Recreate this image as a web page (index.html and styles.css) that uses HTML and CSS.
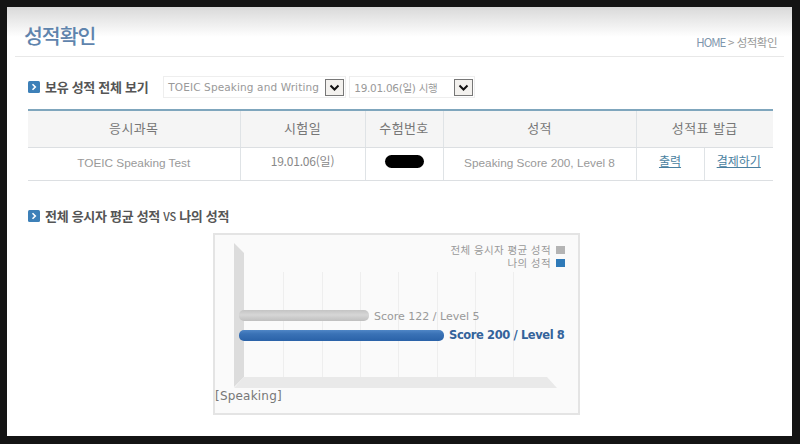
FILE: index.html
```html
<!DOCTYPE html>
<html lang="ko">
<head>
    <meta charset="UTF-8">
    <title>성적확인</title>
    <link rel="stylesheet" href="styles.css">
</head>
<body>
    <div class="page">
        <div class="top">
            <h1>성적확인</h1>
            <div class="crumb"><span class="home">HOME</span> &gt; 성적확인</div>
        </div>

        <div class="heading">
            <svg class="bullet" width="12" height="12" viewBox="0 0 12 12"><rect width="12" height="12" rx="1.5" fill="#3d80b8"/><path d="M4.500 3.200 7.300 6 4.500 8.800" fill="none" stroke="#fff" stroke-width="1.6"/></svg>
            <h2>보유 성적 전체 보기</h2>
            <div class="select sel-test">
                <span>TOEIC Speaking and Writing</span>
                <svg class="arrow" width="19" height="17" viewBox="0 0 19 17"><rect x=".5" y=".5" width="18" height="16" fill="#f3f1ee" stroke="#777"/><path d="M5.500 6.500 9.500 10.500 13.500 6.500" fill="none" stroke="#111" stroke-width="2"/></svg>
            </div>
            <div class="select sel-date">
                <span>19.01.06(일) 시행</span>
                <svg class="arrow" width="19" height="17" viewBox="0 0 19 17"><rect x=".5" y=".5" width="18" height="16" fill="#f3f1ee" stroke="#777"/><path d="M5.500 6.500 9.500 10.500 13.500 6.500" fill="none" stroke="#111" stroke-width="2"/></svg>
            </div>
        </div>

        <table class="scores">
            <colgroup>
                <col class="c1"><col class="c2"><col class="c3"><col class="c4"><col class="c5"><col class="c6">
            </colgroup>
            <tr>
                <th>응시과목</th>
                <th>시험일</th>
                <th>수험번호</th>
                <th>성적</th>
                <th colspan="2">성적표 발급</th>
            </tr>
            <tr>
                <td>TOEIC Speaking Test</td>
                <td class="date">19.01.06(일)</td>
                <td class="num"><span class="blackout"></span></td>
                <td>Speaking Score 200, Level 8</td>
                <td class="link"><a href="#">출력</a></td>
                <td class="link"><a href="#">결제하기</a></td>
            </tr>
        </table>

        <div class="heading second">
            <svg class="bullet" width="12" height="12" viewBox="0 0 12 12"><rect width="12" height="12" rx="1.5" fill="#3d80b8"/><path d="M4.500 3.200 7.300 6 4.500 8.800" fill="none" stroke="#fff" stroke-width="1.6"/></svg>
            <h2>전체 응시자 평균 성적 <span class="vs">VS</span> 나의 성적</h2>
        </div>

        <svg class="chart" width="367" height="182" viewBox="0 0 367 182">
            <defs>
                <linearGradient id="grayBar" x1="0" y1="0" x2="0" y2="1">
                    <stop offset="0" stop-color="#c4c4c4"/>
                    <stop offset=".45" stop-color="#d6d6d6"/>
                    <stop offset="1" stop-color="#bfbfbf"/>
                </linearGradient>
                <linearGradient id="blueBar" x1="0" y1="0" x2="0" y2="1">
                    <stop offset="0" stop-color="#4f86c6"/>
                    <stop offset=".35" stop-color="#3a72b6"/>
                    <stop offset="1" stop-color="#2a62a8"/>
                </linearGradient>
            </defs>
            <rect x="1" y="1" width="365" height="180" fill="#fafafa" stroke="#e4e4e4" stroke-width="2"/>
            <!-- walls -->
            <polygon points="21,10 31,20 31,144 21,154" fill="#dcdcdc"/>
            <polygon points="31,144 334,144 344,155 21,155" fill="#e9e9e9"/>
            <!-- grid -->
            <g stroke="#eeeeee">
                <path d="M70.500 39V144M109.500 39V144M147.500 39V144M185.500 39V144M224.500 39V144M262.500 39V144M300.500 39V144"/>
            </g>
            <!-- bars -->
            <rect x="26" y="77" width="130" height="11" rx="5" fill="url(#grayBar)"/>
            <rect x="26" y="97" width="205" height="11" rx="5" fill="url(#blueBar)"/>
            <text class="val" x="161" y="87">Score 122 / Level 5</text>
            <text class="val mine" x="236" y="106">Score 200 / Level 8</text>
            <!-- legend -->
            <text class="legend" x="338" y="21" text-anchor="end">전체 응시자 평균 성적</text>
            <rect x="343" y="13" width="9" height="8" fill="#b4b4b4"/>
            <text class="legend" x="338" y="34" text-anchor="end">나의 성적</text>
            <rect x="343" y="26" width="9" height="8" fill="#2f7ab8"/>
            <text class="axis" x="2" y="167">[Speaking]</text>
        </svg>
    </div>
</body>
</html>
```

FILE: styles.css
```css
html, body {
    margin: 0;
    height: 100%;
}
body {
    background: #141414;
    padding: 7px 8px 8px 7px;
    box-sizing: border-box;
    overflow: hidden;
    font-family: "Noto Sans CJK KR", "Liberation Sans", sans-serif;
    color: #888;
}
.page {
    height: 429px;
    padding: 0 8px;
    background: linear-gradient(#d9d9d9, #fff 30px);
}
.top {
    display: flex;
    justify-content: space-between;
    align-items: flex-end;
    height: 49px;
    padding: 0 7px 0 9px;
    border-bottom: 1px solid #e8e8e8;
}
h1 {
    margin: 0 0 6px;
    font-size: 20.500px;
    line-height: 30px;
    font-weight: 500;
    letter-spacing: -1px;
    color: #5f84ad;
}
.crumb {
    margin-bottom: 6px;
    font-size: 11.500px;
    line-height: 16px;
    letter-spacing: -.5px;
    color: #999;
}
.home {
    color: #7f97ad;
    letter-spacing: -1px;
}
.heading {
    display: flex;
    align-items: center;
    height: 22px;
    margin: 19px 0 11px 13px;
}
.heading.second {
    margin: 24px 0 6px 13px;
}
.bullet {
    flex: none;
    margin-right: 5px;
}
h2 {
    margin: 0;
    font-size: 13px;
    line-height: 22px;
    font-weight: 700;
    letter-spacing: -.3px;
    color: #555;
}
.vs {
    font-size: 11px;
    font-weight: 500;
}
.select {
    display: flex;
    align-items: center;
    justify-content: space-between;
    box-sizing: border-box;
    height: 22px;
    padding: 0 1px 0 4px;
    border: 1px solid #eee;
    font-family: "DejaVu Sans", "Noto Sans CJK KR", sans-serif;
    font-size: 10.500px;
    color: #999;
}
.sel-test {
    width: 183px;
    margin-left: 15px;
    letter-spacing: .12px;
}
.sel-date {
    width: 126px;
    margin-left: 3px;
    letter-spacing: -.3px;
}
.scores {
    width: 745px;
    margin-left: 13px;
    border-collapse: collapse;
    table-layout: fixed;
    border-top: 2px solid #7fa6bd;
}
.c1 { width: 212px; }
.c2 { width: 125px; }
.c3 { width: 78px; }
.c4 { width: 193px; }
.c5 { width: 68px; }
.c6 { width: 69px; }
.scores th, .scores td {
    text-align: center;
    border-left: 1px solid #dfe3e6;
    border-bottom: 1px solid #dcdfe2;
}
.scores th:first-child, .scores td:first-child {
    border-left: none;
}
.scores th {
    height: 37px;
    padding: 0 0 3px;
    box-sizing: border-box;
    background: #f5f5f5;
    font-size: 13px;
    letter-spacing: .4px;
    font-weight: 400;
    color: #777;
}
.scores td {
    height: 33px;
    padding: 0 0 2px;
    box-sizing: border-box;
    font-family: "Liberation Sans", "Noto Sans CJK KR", sans-serif;
    font-size: 11.800px;
    color: #999;
}
.scores td.date {
    padding-bottom: 6px;
    letter-spacing: -.2px;
    font-family: "Noto Sans CJK KR", sans-serif;
    font-size: 12px;
    color: #888;
}
.scores td.link {
    padding-bottom: 6px;
}
.scores td.num {
    padding-bottom: 5px;
}
.scores a {
    font-family: "Noto Sans CJK KR", sans-serif;
    font-size: 12px;
    color: #4a7f9f;
}
.blackout {
    display: block;
    width: 39px;
    height: 13px;
    margin: 0 auto;
    border-radius: 7px;
    background: #000;
}
.chart {
    display: block;
    margin-left: 198px;
}
.chart text {
    font-family: "DejaVu Sans", "Noto Sans CJK KR", sans-serif;
}
.val {
    font-size: 11px;
    fill: #999;
}
.val.mine {
    font-weight: 700;
    fill: #34639b;
    font-size: 11.500px;
    letter-spacing: -.4px;
}
.chart .legend {
    font-family: "Liberation Sans", "Noto Sans CJK KR", sans-serif;
    font-size: 10.500px;
    letter-spacing: .4px;
    fill: #999;
}
.axis {
    font-size: 12px;
    letter-spacing: .2px;
    fill: #777;
}
```
